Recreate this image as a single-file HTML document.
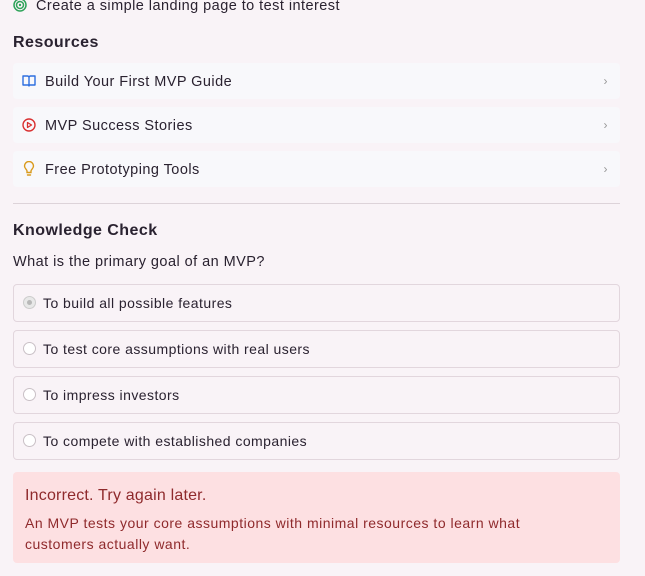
<!DOCTYPE html>
<html><head><style>
body{margin:0;width:645px;height:576px;background:#f9f3f7;font-family:"Liberation Sans",sans-serif;color:#2a2230;position:relative;overflow:hidden;letter-spacing:0.45px}
.a{position:absolute}
.card{position:absolute;left:13px;width:607px;height:36px;background:#f8f8fb;border-radius:4px;font-size:14.5px;line-height:36px}
.card .t{position:absolute;left:32px;top:1px}
.card .ch{position:absolute;right:12px;color:#999;font-size:12px}
.opt{position:absolute;left:13px;width:605px;height:36px;border:1px solid #e2d6dd;border-radius:4px;font-size:14px;line-height:36px;background:#f9f3f7}
.opt .r{position:absolute;left:9px;top:11px;width:11px;height:11px;border:1px solid #c9c0c6;border-radius:50%;background:#fff}
.opt .t{position:absolute;left:29px}
h3{margin:0;font-size:16px;font-weight:bold;position:absolute;left:13px}
</style></head><body>
<div class="a" style="left:13px;top:-4px;font-size:14.5px;line-height:20px">
<svg width="14" height="14" viewBox="0 0 14 14" style="vertical-align:-2px;margin-right:9px"><circle cx="7" cy="7" r="6" fill="none" stroke="#2fa35a" stroke-width="1.5"/><circle cx="7" cy="7" r="3.5" fill="none" stroke="#2fa35a" stroke-width="1.5"/><circle cx="7" cy="7" r="1.2" fill="#2fa35a"/></svg>Create a simple landing page to test interest</div>
<h3 style="top:34px">Resources</h3>
<div class="card" style="top:63px"><svg class="a" style="left:9px;top:11px" width="14" height="14" viewBox="0 0 14 14"><path d="M1 2h4.5a1.5 1.5 0 0 1 1.5 1.5V12a1 1 0 0 0-1-1H1zM13 2H8.5A1.5 1.5 0 0 0 7 3.5V12a1 1 0 0 1 1-1h5z" fill="none" stroke="#2d6fe0" stroke-width="1.4" stroke-linejoin="round"/></svg><span class="t">Build Your First MVP Guide</span><span class="ch">›</span></div>
<div class="card" style="top:107px"><svg class="a" style="left:9px;top:11px" width="14" height="14" viewBox="0 0 14 14"><circle cx="7" cy="7" r="6" fill="none" stroke="#d93030" stroke-width="1.4"/><path d="M5.5 4.5v5l4-2.5z" fill="none" stroke="#d93030" stroke-width="1.3" stroke-linejoin="round"/></svg><span class="t">MVP Success Stories</span><span class="ch">›</span></div>
<div class="card" style="top:151px"><svg class="a" style="left:10px;top:10px" width="12" height="16" viewBox="0 0 12 16"><path d="M4 11.5V10C4 8.5 1.5 7.5 1.5 5a4.5 4.5 0 0 1 9 0c0 2.5-2.5 3.5-2.5 5v1.5zM4.5 14h3" fill="none" stroke="#d99a1c" stroke-width="1.4" stroke-linecap="round"/></svg><span class="t">Free Prototyping Tools</span><span class="ch">›</span></div>
<div class="a" style="left:13px;top:203px;width:607px;height:1px;background:#ddd3d9"></div>
<h3 style="top:222px">Knowledge Check</h3>
<div class="a" style="left:13px;top:254px;font-size:14.5px">What is the primary goal of an MVP?</div>
<div class="opt" style="top:284px"><span class="r" style="background:#e8e8e8;border-color:#ccc"><span class="a" style="left:3px;top:3px;width:5px;height:5px;border-radius:50%;background:#b8b8b8"></span></span><span class="t">To build all possible features</span></div>
<div class="opt" style="top:330px"><span class="r"></span><span class="t">To test core assumptions with real users</span></div>
<div class="opt" style="top:376px"><span class="r"></span><span class="t">To impress investors</span></div>
<div class="opt" style="top:422px"><span class="r"></span><span class="t">To compete with established companies</span></div>
<div class="a" style="left:13px;top:472px;width:607px;height:91px;background:#fde0e2;border-radius:4px;color:#8f2a2c">
<div class="a" style="left:12px;top:15px;font-size:16px;letter-spacing:0.2px">Incorrect. Try again later.</div>
<div class="a" style="left:12px;top:41px;width:560px;font-size:14px;line-height:21px;letter-spacing:0.5px">An MVP tests your core assumptions with minimal resources to learn what customers actually want.</div>
</div>
</body></html>
